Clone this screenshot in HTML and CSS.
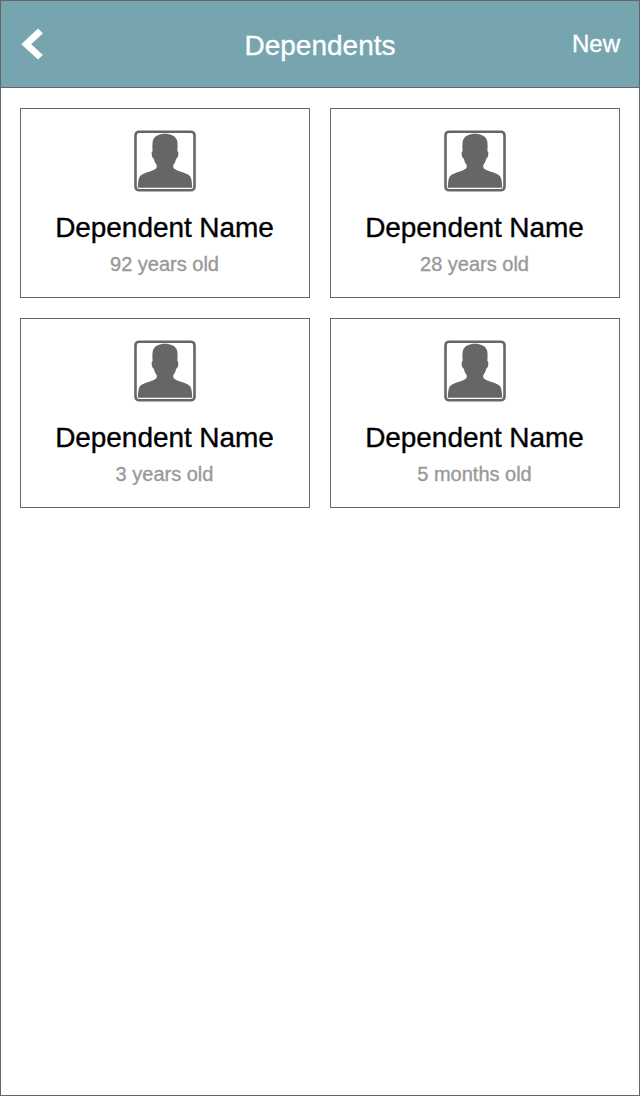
FILE: index.html
```html
<!DOCTYPE html>
<html lang="en">
<head>
<meta charset="utf-8">
<title>Dependents</title>
<link rel="stylesheet" href="styles.css">
</head>
<body>
<svg class="symbols" aria-hidden="true">
  <symbol id="person" viewBox="0 0 62 62">
    <rect x="1.500" y="1.700" width="59" height="58.600" rx="3.600" fill="#fff" stroke="#666" stroke-width="2.600"/>
    <path fill="#666" d="M3.800 57.800C3.900 55 4.200 50.500 5 48C5.800 45.800 7.800 44.400 10.300 43.400C13.500 42 16 41.500 18 40.700C20.500 39.700 21.800 39 22.400 38C22.900 37 22.900 36 22.700 35C21.400 33.500 20.400 31.500 19.900 28.700C18.600 28.500 18 26.500 17.700 24.200C17.500 22.500 17.700 21.500 18.600 21.300C18.400 18 18.200 13.500 18.900 10.500C20.300 5.800 25.500 3.700 31 3.700C36.500 3.700 41.700 5.800 43.100 10.500C43.800 13.500 43.600 18 43.400 21.300C44.300 21.500 44.500 22.500 44.300 24.200C44 26.500 43.400 28.500 42.100 28.700C41.600 31.500 40.600 33.500 39.300 35C39.100 36 39.100 37 39.600 38C40.200 39 41.500 39.700 44 40.700C46 41.500 48.500 42 51.700 43.400C54.200 44.400 56.200 45.800 57 48C57.800 50.500 58.100 55 58.200 57.800Z"/>
  </symbol>
</svg>
<div class="screen">
  <header class="header">
    <a class="back" aria-label="Back">
      <svg class="back-icon" viewBox="0 0 22 32"><path d="M.3 16.300L17 .6L21.900 5.300L10.200 16.300L21.900 27L17 31.600Z" fill="#fff"/></svg>
    </a>
    <h1 class="title">Dependents</h1>
    <a class="new">New</a>
  </header>
  <main class="grid">
    <section class="card">
      <svg class="avatar"><use href="#person"/></svg>
      <h2 class="name">Dependent Name</h2>
      <p class="age">92 years old</p>
    </section>
    <section class="card">
      <svg class="avatar"><use href="#person"/></svg>
      <h2 class="name">Dependent Name</h2>
      <p class="age">28 years old</p>
    </section>
    <section class="card">
      <svg class="avatar"><use href="#person"/></svg>
      <h2 class="name">Dependent Name</h2>
      <p class="age">3 years old</p>
    </section>
    <section class="card">
      <svg class="avatar"><use href="#person"/></svg>
      <h2 class="name">Dependent Name</h2>
      <p class="age">5 months old</p>
    </section>
  </main>
</div>
</body>
</html>
```
FILE: styles.css
```css
* {
  box-sizing: border-box;
}

body {
  margin: 0;
  font-family: "Liberation Sans", Arial, sans-serif;
  -webkit-text-stroke: 0.35px currentColor;
}

.symbols {
  display: none;
}

.screen {
  height: 1096px;
  border: 1px solid #666;
  background: #fff;
}

.header {
  display: grid;
  grid-template-columns: 100px 1fr 100px;
  height: 87px;
  padding: 0 19px;
  border-bottom: 1px solid #666;
  background: #76a5af;
  color: #fff;
}

.back {
  padding-top: 27px;
}

.back-icon {
  display: block;
  width: 22px;
  height: 32px;
  margin-left: 1px;
}

.title {
  margin: 0;
  padding-top: 29px;
  font-size: 28px;
  font-weight: 400;
  line-height: 32px;
  text-align: center;
}

.new {
  padding-top: 29px;
  font-size: 24px;
  line-height: 28px;
  text-align: right;
}

.grid {
  display: grid;
  grid-template-columns: 1fr 1fr;
  grid-auto-rows: 190px;
  gap: 20px;
  padding: 20px 19px;
}

.card {
  display: flex;
  flex-direction: column;
  align-items: center;
  padding-top: 21px;
  border: 1px solid #666;
}

.avatar {
  width: 62px;
  height: 62px;
}

.name {
  margin: 20px 1px 0 0;
  font-size: 28px;
  font-weight: 400;
  line-height: 32px;
  letter-spacing: -0.06px;
  color: #000;
}

.age {
  margin: 8px 1px 0 0;
  font-size: 20px;
  line-height: 24px;
  color: #999;
}
```
